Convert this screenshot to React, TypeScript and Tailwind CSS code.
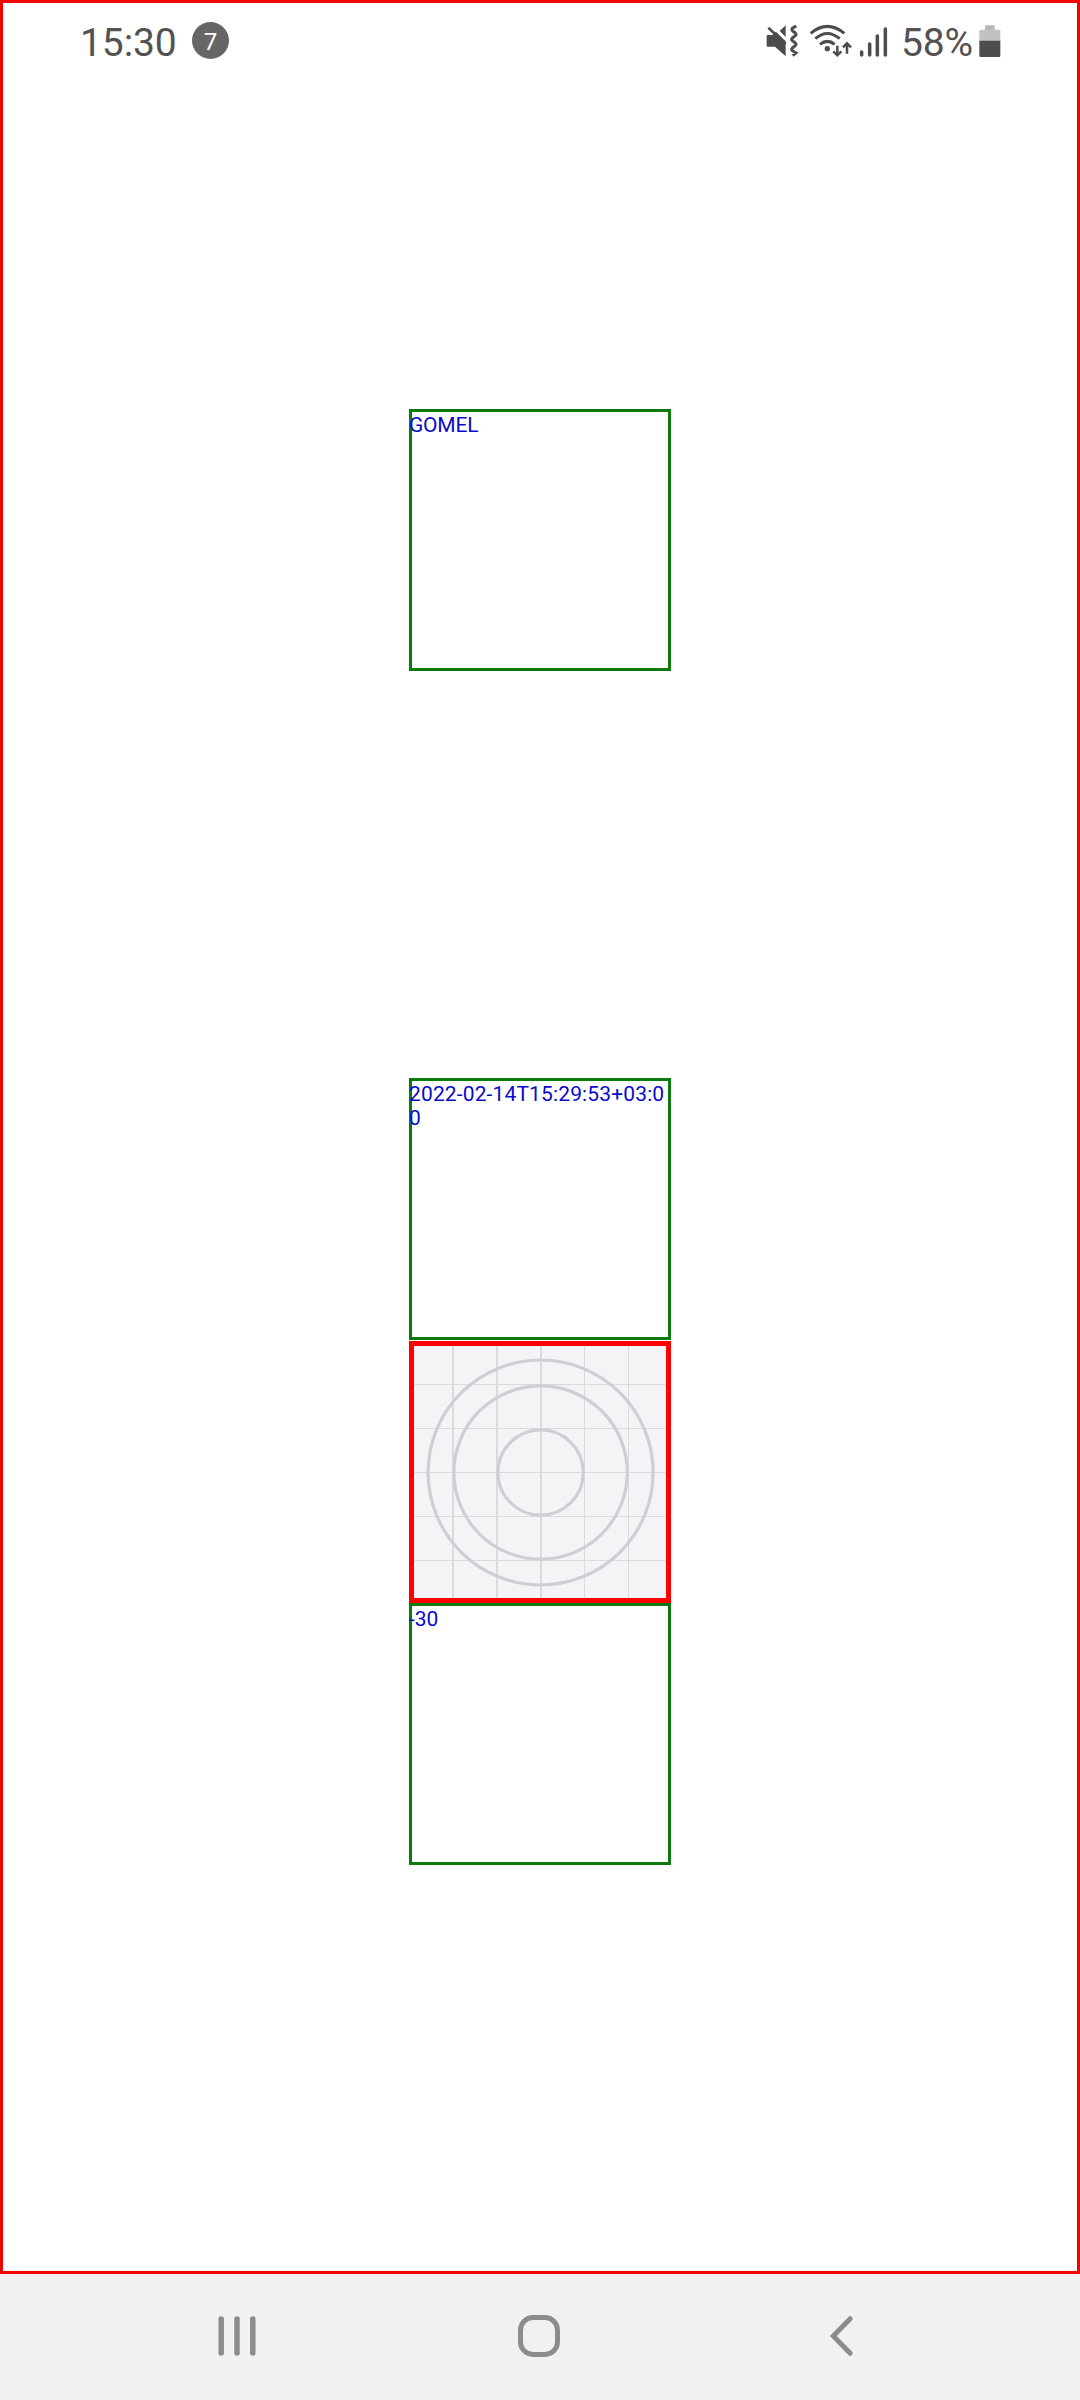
import React from "react";

const GREEN_BOX =
  "h-[262px] w-[262px] shrink-0 border-3 border-[#0b7a0f] pt-px text-[21px] leading-[24px] font-normal text-[#0a0acb]";

function MuteIcon() {
  return (
    <svg className="h-[34px] w-[33px]" viewBox="48 40 99 102" fill="none">
      <path d="M53 73H67L78 63L107 92V137L75 108H53Q50 108 50 105V76Q50 73 53 73Z" fill="#4d4d4d" />
      <path d="M89 61L107 44V79Z" fill="#4d4d4d" />
      <path d="M55 51L107 100" stroke="#4d4d4d" strokeWidth="8" />
      <path
        d="M139 46L130 51Q123 55 127 60L136 67Q140 71 136 75L127 82Q123 86 127 90L136 97Q140 101 136 105L127 112Q123 116 127 120L138 127L128 135"
        stroke="#4d4d4d"
        strokeWidth="9"
      />
    </svg>
  );
}

function WifiIcon() {
  return (
    <svg className="h-[34px] w-[43px]" viewBox="177 40 129 102" fill="none" stroke="#4d4d4d" strokeWidth="9">
      <path d="M182 68Q232 26 283 68" />
      <path d="M196 84Q232 53 269 84" />
      <path d="M210 101Q232 83 254 101" />
      <circle cx="232" cy="114" r="8" fill="#4d4d4d" stroke="none" />
      <path d="M262 105V132M250 122L262 134L274 122" strokeWidth="7.5" />
      <path d="M291 129V101M279 110L291 98L303 110" strokeWidth="7.5" />
    </svg>
  );
}

function SignalIcon() {
  return (
    <svg className="h-[34px] w-[30px]" viewBox="327 40 90 102" stroke="#4d4d4d" strokeWidth="10.5" strokeLinecap="round">
      <path d="M335 124V133M359 100V133M382 76V133M406 55V133" />
    </svg>
  );
}

function BatteryIcon() {
  return (
    <svg className="h-[34px] w-[22px]" viewBox="686 40 66 102">
      <path d="M704 59V47Q704 44 707 44H730Q733 44 733 47V59Z" fill="#b8b8b8" />
      <path d="M687 91V62Q687 57 692 57H745Q750 57 750 62V91Z" fill="#c2c2c2" />
      <path d="M687 90H750V135Q750 139 746 139H691Q687 139 687 135Z" fill="#4d4d4d" />
    </svg>
  );
}

function StatusBar() {
  return (
    <header className="flex h-[75px] items-center justify-between pr-[76px] pl-[77px] text-[39px] leading-[46px] font-normal text-[#525252]">
      <div className="flex items-center">
        <span className="w-[112px] pt-[5px] tracking-[-0.1px]">15:30</span>
        <span className="flex h-[37px] w-[37px] items-center justify-center rounded-full bg-[#666] pt-[2px] text-[24px] leading-none text-white">
          7
        </span>
      </div>
      <div className="flex items-center">
        <MuteIcon />
        <div className="w-[10px]" />
        <WifiIcon />
        <div className="w-[7px]" />
        <SignalIcon />
        <span className="ml-[12px] w-[78px] pt-[5px] tracking-[-0.2px] whitespace-nowrap">58%</span>
        <BatteryIcon />
      </div>
    </header>
  );
}

function Placeholder() {
  return (
    <div className="h-[262px] w-[262px] shrink-0 border-5 border-[#ff0000] bg-[#f4f4f7]">
      <svg className="block h-full w-full" viewBox="414 1346 252 252" fill="none">
        <path d="M453 1346V1598M497 1346V1598M541 1346V1598" stroke="#dbdbdf" strokeWidth="2" />
        <path
          d="M584.5 1346V1598M628.5 1346V1598M414 1384.5H666M414 1428.5H666M414 1472.5H666M414 1516.5H666M414 1560.5H666"
          stroke="#dbdbdf"
        />
        <g stroke="#cfced5" strokeWidth="3.2">
          <circle cx="540.6" cy="1472.5" r="112.5" />
          <circle cx="540.6" cy="1472.5" r="86.7" />
          <circle cx="540.6" cy="1472.5" r="42.7" />
        </g>
      </svg>
    </div>
  );
}

function NavBar() {
  return (
    <nav className="flex h-[126px] items-center bg-[#f1f1f1] pb-[2px] pl-[217px]">
      <svg className="h-[44px] w-[40px]" viewBox="217 2314 40 44" stroke="#8c8c8c" strokeWidth="5.5" strokeLinecap="round">
        <path d="M221.2 2319V2353M237 2319V2353M252.8 2319V2353" />
      </svg>
      <svg className="ml-[260px] h-[44px] w-[44px]" viewBox="517 2314 44 44" fill="none" stroke="#8c8c8c" strokeWidth="5">
        <rect x="520.5" y="2317.5" width="37" height="37" rx="12.5" />
      </svg>
      <svg className="ml-[267px] h-[44px] w-[28px]" viewBox="828 2314 28 44" fill="none" stroke="#8c8c8c" strokeWidth="5" strokeLinecap="round">
        <path d="M850.2 2318.7L833.3 2336L850.2 2353.3" />
      </svg>
    </nav>
  );
}

export default function App() {
  return (
    <div className="flex h-[2400px] w-[1080px] flex-col bg-white font-[Roboto,sans-serif]">
      <main className="flex h-[2274px] flex-col border-3 border-[#f50000]">
        <StatusBar />
        <div className="flex flex-col items-center pt-[331px]">
          <div className={GREEN_BOX}>
            <span className="-ml-[3px] block tracking-[-0.2px]">GOMEL</span>
          </div>
          <div className="h-[407px]" />
          <div className={GREEN_BOX}>
            <span className="-ml-[3px] block w-[262px] tracking-[0.14px] break-all">2022-02-14T15:29:53+03:00</span>
          </div>
          <div className="h-[1px]" />
          <Placeholder />
          <div className={GREEN_BOX}>
            <span className="-ml-[3px] block">-30</span>
          </div>
        </div>
      </main>
      <NavBar />
    </div>
  );
}
